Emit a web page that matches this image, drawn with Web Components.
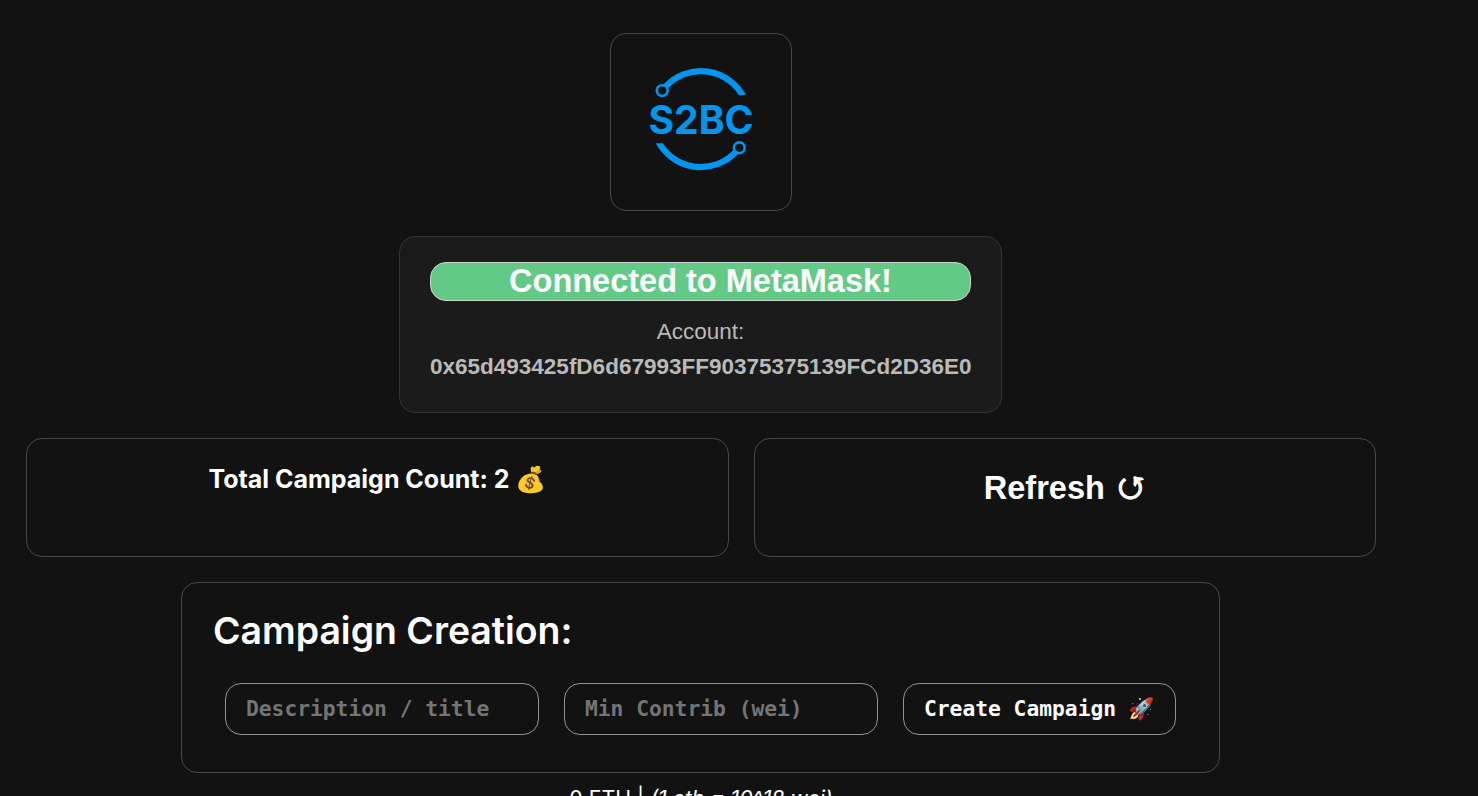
<!DOCTYPE html>
<html lang="en">
<head>
<meta charset="utf-8">
<title>Campaigns</title>
<style>
html, body { margin: 0; height: 100%; overflow: hidden; background: #121212; }
body { color: #fff; font-family: Inter, sans-serif; }
</style>
</head>
<body>
<campaign-app></campaign-app>
<script>
const define = (name, html) => customElements.define(name, class extends HTMLElement {
  constructor() {
    super();
    const t = document.createElement('template');
    t.innerHTML = html;
    this.attachShadow({ mode: 'open' }).append(t.content.cloneNode(true));
  }
});

define('ui-card', `
<style>
:host { display: block; box-sizing: border-box; border: 1px solid #484848; border-radius: 16px; }
</style><slot></slot>`);

define('brand-logo', `
<style>
:host { display: block; width: 120px; height: 120px; }
svg { display: block; }
text { font: 700 40px Inter, sans-serif; fill: #0096f0; }
</style>
<svg width="120" height="120" viewBox="0 -.4 120 120" fill="none" stroke="#0096f0">
  <path d="M24.6 27.2A48 48 0 0 1 103 38.6" stroke-width="6.2"/>
  <path d="M94.8 92.5A48 48 0 0 1 16.6 80.8" stroke-width="6.2"/>
  <path d="M95 36.4L107 35v7H95zM12 83.8h13V77H12z" fill="#121212" stroke="none"/>
  <circle cx="21.2" cy="31.2" r="5.4" stroke-width="2.6" fill="#121212"/>
  <circle cx="98.3" cy="88.4" r="5.4" stroke-width="2.6" fill="#121212"/>
  <text x="7.5" y="74.6" textLength="105" lengthAdjust="spacingAndGlyphs" stroke="none">S2BC</text>
</svg>`);

define('wallet-status', `
<style>
:host { display: block; text-align: center; font-family: "Liberation Sans", sans-serif; }
h1 { box-sizing: border-box; height: 39px; margin: 0 0 13px; border: 1px solid #d2d2d2; border-radius: 16px;
  background: #63c987; color: #fff; font-size: 32.5px; line-height: 36px; }
p { margin: 0; color: #bababa; font-size: 22.5px; line-height: 35px; white-space: nowrap; }
</style>
<h1>Connected to MetaMask!</h1>
<p>Account:</p>
<p><b><slot></slot></b></p>`);

define('campaign-count', `
<style>
:host { display: block; text-align: center; font: 700 25px/32px Inter, "Noto Color Emoji", sans-serif; }
</style>Total Campaign Count: <slot></slot> 💰`);

define('refresh-button', `
<style>
:host { display: block; }
button { display: block; width: 100%; padding: 0; border: 0; background: none; color: #fff;
  font: 700 32.5px/38px "Liberation Sans", sans-serif; }
span { display: inline-block; margin-left: 2px; font: 700 25.5px/20px "Noto Sans Math", "DejaVu Sans", sans-serif; vertical-align: 4px;
  -webkit-text-stroke: .4px #fff; }
</style><button>Refresh <span>↺</span></button>`);

define('campaign-form', `
<style>
:host { display: block; }
h2 { margin: 0; padding-top: 1px; font: 600 37.4px/46px Inter, sans-serif; }
form { display: flex; gap: 25px; margin: 29px 0 0 12px; }
input, button { box-sizing: border-box; height: 52px; margin: 0; padding: 0 20px 2px; border: 1px solid #929292; border-radius: 16px;
  background: transparent; color: #fff; font: 700 21.28px "DejaVu Sans Mono", "Noto Color Emoji", monospace; white-space: nowrap; }
input { width: 314px; }
input::placeholder { color: #757575; opacity: 1; }
button { width: 273px; }
</style>
<h2>Campaign Creation:</h2>
<form>
  <input placeholder="Description / title">
  <input placeholder="Min Contrib (wei)">
  <button type="button">Create Campaign 🚀</button>
</form>`);

define('wei-hint', `
<style>
:host { display: block; height: 23px; overflow: hidden; text-align: center; font: 400 21.3px/51px Inter, sans-serif; }
</style>0 ETH | <i>(1 eth = 10^18 wei)</i>`);

define('campaign-app', `
<style>
:host { display: flex; flex-direction: column; align-items: center; box-sizing: border-box; width: 1402px; height: 796px; padding: 33px 26px 0; overflow: hidden; }
.logo { width: 182px; height: 178px; padding: 25px 30px; margin-bottom: 25px; }
.wallet { width: 603px; height: 177px; padding: 25px 30px; margin: 0 1px 25px 0; border-color: #333; background: #1b1b1b; }
.row { display: grid; grid-template-columns: 703px 622px; gap: 25px; margin-bottom: 25px; }
.row ui-card { height: 119px; }
.count { padding: 24px 30px; }
.refresh { padding: 30px; }
.create { width: 1039px; height: 191px; margin-right: 1px; padding: 24px 31px; }
</style>
<ui-card class="logo"><brand-logo></brand-logo></ui-card>
<ui-card class="wallet"><wallet-status>0x65d493425fD6d67993FF90375375139FCd2D36E0</wallet-status></ui-card>
<div class="row">
  <ui-card class="count"><campaign-count>2</campaign-count></ui-card>
  <ui-card class="refresh"><refresh-button></refresh-button></ui-card>
</div>
<ui-card class="create"><campaign-form></campaign-form></ui-card>
<wei-hint></wei-hint>`);
</script>
</body>
</html>
